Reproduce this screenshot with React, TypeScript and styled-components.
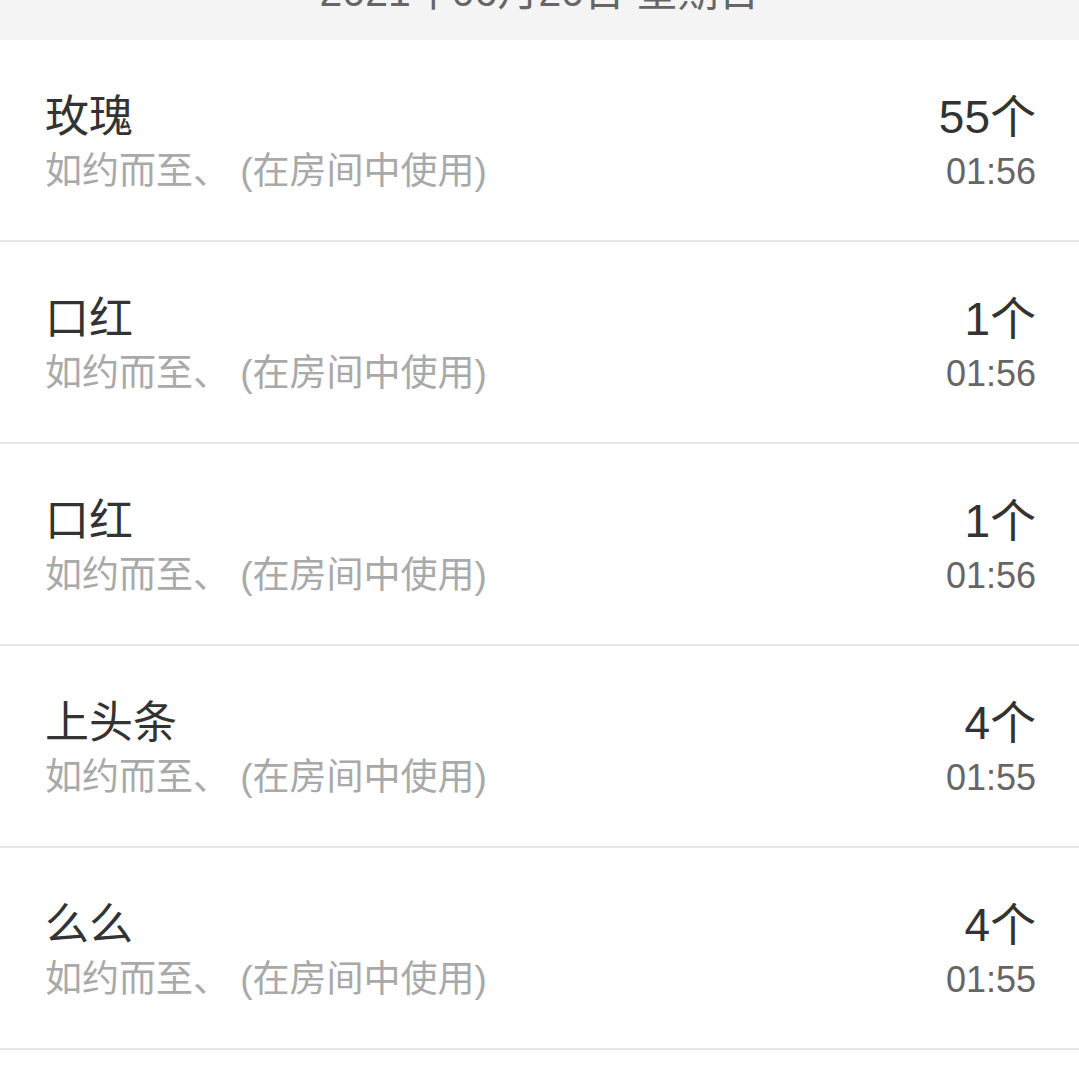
import React from 'react';
import styled, { createGlobalStyle } from 'styled-components';

const GlobalStyle = createGlobalStyle`
  html, body {
    margin: 0;
    padding: 0;
    background: #ffffff;
  }
  body {
    font-family: "Liberation Sans", "Noto Sans CJK SC", sans-serif;
  }
`;

const Page = styled.div`
  width: 1079px;
  min-height: 1092px;
  background: #fff;
`;

const DateBar = styled.div`
  height: 40px;
  background: #f4f4f4;
  overflow: hidden;
  display: flex;
  justify-content: center;
`;

const DateText = styled.div`
  font-size: 41px;
  line-height: 41px;
  color: #666;
  margin-top: -28px;
  white-space: nowrap;
`;

const List = styled.div`
  display: flex;
  flex-direction: column;
`;

const Row = styled.div`
  height: 202px;
  box-sizing: border-box;
  padding: 4px 43px 0 45px;
  display: flex;
  align-items: center;
  justify-content: space-between;
  border-bottom: 2px solid #e6e6e6;
`;

const Col = styled.div<{ $right?: boolean }>`
  display: flex;
  flex-direction: column;
  align-items: ${p => (p.$right ? 'flex-end' : 'flex-start')};
  gap: 4px;
`;

const Title = styled.div`
  font-size: 44px;
  line-height: 56px;
  color: #333;
`;

const Sub = styled.div`
  font-size: 37px;
  line-height: 46px;
  color: #a9a9a9;
  white-space: pre;
`;

const Count = styled.div`
  font-size: 46px;
  line-height: 56px;
  color: #333;
`;

const Time = styled.div`
  font-size: 36px;
  line-height: 46px;
  color: #666;
`;

const gifts = [
  { name: '玫瑰', count: '55个', time: '01:56' },
  { name: '口红', count: '1个', time: '01:56' },
  { name: '口红', count: '1个', time: '01:56' },
  { name: '上头条', count: '4个', time: '01:55' },
  { name: '么么', count: '4个', time: '01:55' },
];

export default function App() {
  return (
    <Page>
      <GlobalStyle />
      <DateBar>
        <DateText>2021年06月20日 星期日</DateText>
      </DateBar>
      <List>
        {gifts.map((g, i) => (
          <Row key={i}>
            <Col>
              <Title>{g.name}</Title>
              <Sub>如约而至、 (在房间中使用)</Sub>
            </Col>
            <Col $right>
              <Count>{g.count}</Count>
              <Time>{g.time}</Time>
            </Col>
          </Row>
        ))}
      </List>
    </Page>
  );
}
